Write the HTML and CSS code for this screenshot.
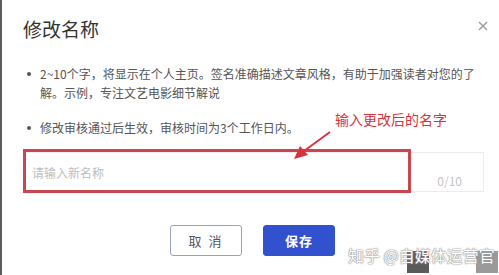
FILE: index.html
```html
<!DOCTYPE html>
<html lang="zh-CN">
<head>
    <meta charset="UTF-8">
    <meta name="viewport" content="width=device-width, initial-scale=1.0">
    <title>修改名称</title>
    <link rel="stylesheet" href="styles.css">
</head>
<body>
    <div class="dialog">
        <div class="dialog-head">
            <h2 class="title">修改名称</h2>
            <span class="close">
                <svg width="10" height="10" viewBox="0 0 10 10">
                    <path d="M1 1 L9 9 M9 1 L1 9" stroke="#9a9a9a" stroke-width="1.4" fill="none"/>
                </svg>
            </span>
        </div>

        <ul class="tips">
            <li>2~10个字，将显示在个人主页。签名准确描述文章风格，有助于加强读者对您的了解。示例，专注文艺电影细节解说</li>
            <li>修改审核通过后生效，审核时间为3个工作日内。</li>
        </ul>

        <div class="field">
            <input class="name-input" type="text" placeholder="请输入新名称">
            <span class="count">0/10</span>
            <div class="mark-box"></div>
        </div>

        <div class="actions">
            <button class="btn btn-cancel">取 消</button>
            <button class="btn btn-save">保存</button>
        </div>

        <!-- annotation on the screenshot -->
        <div class="mark-text">输入更改后的名字</div>
        <svg class="mark-arrow" width="50" height="40" viewBox="0 0 50 40">
            <path d="M40 2 L14 21" stroke="#d8333c" stroke-width="2" fill="none"/>
            <path d="M4 29 L10 16 L18 25 Z" fill="#d8333c"/>
        </svg>

        <div class="watermark">知乎 @自媒体运营官</div>
        <div class="patch patch-dark"></div>
        <div class="patch patch-light"></div>
    </div>
</body>
</html>
```

FILE: styles.css
```css
* {
    box-sizing: border-box;
}

body {
    margin: 0;
    background: #fff;
    font-family: "Noto Sans CJK SC", "Liberation Sans", sans-serif;
    color: #555;
}

.dialog {
    position: relative;
    width: 499px;
    height: 275px;
    overflow: hidden;
    border-left: 2px solid #5c5c5c;
    padding: 16px 15px 0 21px;
    background: #fff;
}

.dialog-head {
    display: flex;
    justify-content: space-between;
    align-items: center;
}

.title {
    margin: 0;
    font-size: 19px;
    line-height: 26px;
    font-weight: normal;
    color: #333;
}

.close {
    display: flex;
    margin-right: -4px;
    margin-top: -6px;
}

.tips {
    list-style: none;
    margin: 22px 0 0;
    padding: 0;
    width: 452px;
}

.tips li {
    position: relative;
    padding-left: 17px;
    font-size: 12px;
    line-height: 19px;
    color: #555;
}

.tips li + li {
    margin-top: 16px;
}

.tips li::before {
    content: "";
    position: absolute;
    left: 4px;
    top: 8px;
    width: 4px;
    height: 4px;
    border-radius: 50%;
    background: #555;
}

.field {
    position: relative;
    margin-top: 15px;
    width: 461px;
}

.name-input {
    display: block;
    width: 100%;
    height: 40px;
    padding: 0 8px;
    border: 1px solid #ececec;
    font-family: inherit;
    font-size: 12px;
    color: #333;
    outline: none;
}

.name-input::placeholder {
    color: #bdbdbd;
}

.count {
    position: absolute;
    right: 22px;
    bottom: 0;
    font-size: 12px;
    line-height: 22px;
    color: #c4c4c4;
}

.mark-box {
    position: absolute;
    left: 0;
    top: -3px;
    width: 388px;
    height: 44px;
    border: 3px solid #c9464e;
}

.actions {
    display: flex;
    justify-content: center;
    gap: 21px;
    margin-top: 33px;
    padding-right: 2px;
}

.btn {
    width: 72px;
    height: 31px;
    border-radius: 3px;
    font-family: inherit;
    font-size: 13px;
    cursor: pointer;
}

.btn-cancel {
    background: #fff;
    border: 1px solid #9aa3b5;
    color: #556;
    letter-spacing: 2px;
}

.btn-save {
    background: #3151cf;
    border: 1px solid #3151cf;
    color: #fff;
    font-weight: bold;
    letter-spacing: 1px;
}

.mark-text {
    position: absolute;
    left: 333px;
    top: 108px;
    font-size: 14px;
    line-height: 22px;
    color: #d8333c;
}

.mark-arrow {
    position: absolute;
    left: 288px;
    top: 130px;
}

.watermark {
    position: absolute;
    left: 346px;
    top: 245px;
    font-size: 16px;
    line-height: 20px;
    color: #fff;
    white-space: nowrap;
    text-shadow: 0 0 1px #8a8a8a, 0 0 1px #8a8a8a, 0 0 2px #aaa;
    z-index: 2;
}

.patch {
    position: absolute;
    top: 251px;
    width: 22px;
    height: 22px;
}

.patch-dark {
    left: 405px;
    background: #5a5a5a;
}

.patch-light {
    left: 474px;
    background: #9a9a9a;
}
```
